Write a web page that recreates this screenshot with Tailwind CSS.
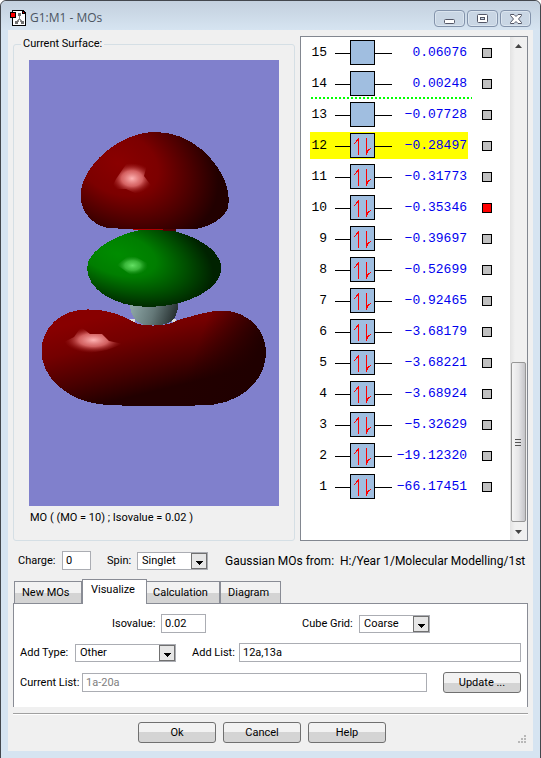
<!DOCTYPE html>
<html lang="en">
<head>
  <meta charset="UTF-8" />
  <meta name="viewport" content="width=device-width, initial-scale=1.0"/>
  <title>G1:M1 - MOs</title>
  <script src="https://cdn.jsdelivr.net/npm/@tailwindcss/browser@4"></script>
</head>
<body class="bg-white font-['Roboto',sans-serif] text-[11px] leading-4 text-black">

  <div class="min-h-screen flex flex-col rounded-t-md border border-[#43474d] bg-[#d6e4f1] px-[7px] pb-[7px]">

    <!-- title bar -->
    <header class="-mx-[7px] px-[7px] h-[29px] shrink-0 flex items-center rounded-t-md bg-gradient-to-b from-[#c3d0de] to-[#d6e4f1]">
      <svg class="w-4 h-[18px] ml-0.5 mt-1.5" viewBox="0 0 16 18" shape-rendering="crispEdges">
        <path d="M2.500 .5h10l3 3v12h-13z" fill="#fff" stroke="#000"/>
        <path d="M12 0h1l3 3v2h-1v-1h-3z" fill="#000"/>
        <path d="M13 2h1v1h-1z" fill="#f00"/>
        <path d="M9.500 6v4M9.500 9l-3 4M9.500 9l3 4" stroke="#888" stroke-width="1.500" fill="none"/>
        <path d="M8 3h3v3h-3zM5 11h3v3h-3zM11 11h3v3h-3z" fill="#707070"/>
        <rect x=".5" y="2.500" width="5" height="5" fill="#f00" stroke="#000"/>
      </svg>
      <h1 class="flex-1 ml-1 mt-1 font-['Open_Sans',sans-serif] text-[12px] text-[#4c5562]">G1:M1 - MOs</h1>
      <div class="flex gap-0.5 mt-1.5 mr-0.5">
        <button aria-label="Minimize" class="w-[31px] h-[17px] grid place-items-center rounded-sm border border-[#8393ab] bg-[#c9d6e4] shadow-[inset_0_0_0_1px_#dbe5ef]">
          <svg class="w-3 h-3" viewBox="0 0 12 12"><rect x=".5" y="6.500" width="10" height="4" rx="1" fill="#fff" stroke="#535666"/></svg>
        </button>
        <button aria-label="Maximize" class="w-[31px] h-[17px] grid place-items-center rounded-sm border border-[#8393ab] bg-[#c9d6e4] shadow-[inset_0_0_0_1px_#dbe5ef]">
          <svg class="w-3 h-3" viewBox="0 0 12 12"><rect x=".5" y="1.500" width="10" height="8" rx="1" fill="#fff" stroke="#535666"/><rect x="3.500" y="4.500" width="4" height="2" fill="#c9d6e4" stroke="#535666"/></svg>
        </button>
        <button aria-label="Close" class="w-[31px] h-[17px] grid place-items-center rounded-sm border border-[#8393ab] bg-[#c9d6e4] shadow-[inset_0_0_0_1px_#dbe5ef]">
          <svg class="w-3 h-3" viewBox="0 0 12 12"><path d="M.5 1.500h3.500l2 2 2-2h3.500v1l-3 3.500 3 3.500v1h-3.500l-2-2-2 2h-3.500v-1l3-3.500-3-3.500z" fill="#fff" stroke="#535666"/></svg>
        </button>
      </div>
    </header>

    <main class="flex-1 flex flex-col bg-[#f0f0f0] px-[5px] pt-1.5 pb-2">

      <div class="flex gap-[5px]">
        <!-- surface view -->
        <fieldset class="flex-1 min-w-0 h-[505px] rounded-[3px] border border-[#d5dfe5] px-[15px]">
          <legend class="-ml-2 px-0.5">Current Surface:</legend>
          <svg class="mt-2 w-full h-[446px] bg-[#8080cc]" viewBox="29 60 250 446" preserveAspectRatio="xMidYMid slice" role="img" aria-label="Molecular orbital 10">
            <defs>
              <radialGradient id="red1" gradientUnits="userSpaceOnUse" cx="118" cy="163" r="105" gradientTransform="translate(118 163) rotate(25) scale(1 .72) translate(-118 -163)">
                <stop offset="0" stop-color="#8a0000"/><stop offset=".4" stop-color="#7c0000"/><stop offset=".72" stop-color="#4d0000"/><stop offset="1" stop-color="#220000"/>
              </radialGradient>
              <radialGradient id="green" gradientUnits="userSpaceOnUse" cx="118" cy="254" r="98" gradientTransform="translate(118 254) rotate(16) scale(1 .52) translate(-118 -254)">
                <stop offset="0" stop-color="#008c00"/><stop offset=".4" stop-color="#007e00"/><stop offset=".72" stop-color="#004e00"/><stop offset="1" stop-color="#002200"/>
              </radialGradient>
              <linearGradient id="red2" gradientUnits="userSpaceOnUse" x1="120" y1="312" x2="142" y2="402">
                <stop offset="0" stop-color="#880000"/><stop offset=".3" stop-color="#740000"/><stop offset=".65" stop-color="#480000"/><stop offset=".92" stop-color="#220000"/>
              </linearGradient>
              <linearGradient id="shade" gradientUnits="userSpaceOnUse" x1="200" y1="338" x2="256" y2="358">
                <stop offset="0" stop-color="#200000" stop-opacity="0"/><stop offset="1" stop-color="#200000"/>
              </linearGradient>
              <linearGradient id="grey" gradientUnits="userSpaceOnUse" x1="134" y1="304" x2="174" y2="318">
                <stop offset="0" stop-color="#8aa3a3"/><stop offset=".5" stop-color="#647878"/><stop offset="1" stop-color="#293333"/>
              </linearGradient>
              <radialGradient id="pink"><stop offset="0" stop-color="#ffb4b4"/><stop offset=".5" stop-color="#e87878" stop-opacity=".8"/><stop offset="1" stop-color="#a02020" stop-opacity="0"/></radialGradient>
              <radialGradient id="lime"><stop offset="0" stop-color="#64e064"/><stop offset=".5" stop-color="#48c448" stop-opacity=".8"/><stop offset="1" stop-color="#209020" stop-opacity="0"/></radialGradient>
            </defs>
            <g shape-rendering="crispEdges">
              <path d="M130 319h5v3h-5zM172 319h4v3h-4z" fill="#ddd"/>
              <path d="M87 309.500C108 309 124 316 134 322C140 327 170 327 178 320C190 317 208 310.500 222 310.500C248 311 266 330 266 352C266 378 246 400 212 405C198 406 118 406 106 405C66 402 41.500 376 41.500 352C41.500 326 62 309.500 87 309.500Z" fill="url(#red2)"/>
              <path d="M178 320C190 317 208 310.500 222 310.500C248 311 266 330 266 352C266 378 246 400 212 405L178 405.500Z" fill="url(#shade)"/>
              <path d="M130 300h48c1 8-1 15-5 20c-4 4-12 5.500-20 5.500c-7 0-12-1-16-4c-5-5-8-12-7-21.500z" fill="url(#grey)"/>
              <path d="M155 132C120 132 80.500 166 80.500 196C81 212 93 225 106 227.500C125 230 175 229.500 195 229C212 227 226 216 228.500 206C230.500 182 217 163 201 149C188 138 172 132 155 132Z" fill="url(#red1)"/>
              <path d="M140 230C112 236 87 252 87 268C87 288 112 307 150 307C190 306 221.500 288 221.500 268C221.500 252 200 237 170 230Z" fill="url(#green)"/>
              <path d="M133 229h30v1h-30z" fill="#b00000"/>
              <path d="M163 229h13v2h-13z" fill="#500000"/>
            </g>
            <path d="M111 189l5-10 11-16 20 2-3 11 9 12-16 6-11-5z" fill="url(#pink)"/>
            <path d="M117 265l11-9 8 1 11 6 1 10-17 2z" fill="url(#lime)"/>
            <path d="M64 342l10-5 7-10 9 7 12 0 7 7 14 3-16 6-17 3-18-1z" fill="url(#pink)"/>
          </svg>
          <p class="mt-1 ml-px">MO ( (MO = 10) ; Isovalue = 0.02 )</p>
        </fieldset>

        <!-- orbital energies -->
        <section class="w-[228px] h-[505px] flex border border-[#828790] bg-white">
          <div class="flex-1 pl-[9px]">
            <table class="border-separate border-spacing-0 font-['Liberation_Mono',monospace] text-[13px]">
              <tbody id="orbitals"></tbody>
            </table>
          </div>
          <div class="w-[17px] flex flex-col items-center bg-gradient-to-r from-[#e3e3e3] to-[#f0f0f0] to-30%">
            <svg class="w-[7px] h-1 mt-[7px]" viewBox="0 0 7 4"><path d="M3.500 0L7 4H0z" fill="#444"/></svg>
            <div class="mt-auto w-[15px] h-40 grid place-items-center rounded-xs border border-[#979797] bg-gradient-to-r from-[#f5f5f5] via-[#e6e6e8] to-[#c4c4c8]">
              <svg class="w-[7px] h-2" viewBox="0 0 7 8" shape-rendering="crispEdges"><path d="M0 1h6M0 4h6M0 7h6" stroke="#555"/></svg>
            </div>
            <svg class="w-[7px] h-1 mt-2 mb-1.5" viewBox="0 0 7 4"><path d="M0 0h7L3.500 4z" fill="#444"/></svg>
          </div>
        </section>
      </div>

      <!-- charge and spin -->
      <div class="flex items-center mt-[10px] pl-[5px] h-[19px] whitespace-nowrap">
        <label for="charge" class="w-11 shrink-0">Charge:</label>
        <input id="charge" value="0" class="w-[29px] h-[19px] px-[3px] border border-[#abadb3] bg-white">
        <label for="spin" class="w-[30px] shrink-0 ml-4">Spin:</label>
        <span class="relative w-[71px] h-[18px] shrink-0">
          <select id="spin" class="block w-full h-full appearance-none pl-1 border border-[#abadb3] bg-white"><option>Singlet</option><option>Triplet</option></select>
          <svg class="absolute right-px top-px w-4 h-4 pointer-events-none" viewBox="0 0 16 16" shape-rendering="crispEdges"><rect x=".5" y=".5" width="15" height="15" fill="#e6e6e6" stroke="#707070"/><path d="M4 8h8l-4 4z" fill="#000"/></svg>
        </span>
        <p class="ml-[17px] text-[12px] whitespace-pre">Gaussian MOs from:  H:/Year 1/Molecular Modelling/1st</p>
      </div>

      <!-- tabs -->
      <div role="tablist" class="flex items-end mt-[9px] pl-px h-6">
        <button role="tab" aria-selected="false" class="w-[68px] h-[22px] pl-[7px] text-left border border-b-0 border-[#898c95] bg-linear-to-b from-[#f2f2f2] from-50% to-[#d4d4d4] to-50%">New MOs</button>
        <button role="tab" aria-selected="true" class="relative z-10 w-[65px] h-[25px] -mb-px pl-2 pb-1 text-left border border-b-0 border-[#898c95] bg-white">Visualize</button>
        <button role="tab" aria-selected="false" class="w-[73px] h-[22px] pl-1.5 text-left border border-l-0 border-b-0 border-[#898c95] bg-linear-to-b from-[#f2f2f2] from-50% to-[#d4d4d4] to-50%">Calculation</button>
        <button role="tab" aria-selected="false" class="w-[61px] h-[22px] pl-[7px] text-left border border-b-0 border-[#898c95] bg-linear-to-b from-[#f2f2f2] from-50% to-[#d4d4d4] to-50%">Diagram</button>
      </div>
      <div role="tabpanel" class="flex flex-col gap-[10px] h-[104px] border border-b-0 border-[#898c95] bg-white pt-[10px] px-1.5">
        <div class="flex items-center h-[19px] pl-[92px]">
          <label for="isovalue" class="w-[49px]">Isovalue:</label>
          <input id="isovalue" value="0.02" class="w-[45px] h-[19px] px-[3px] border border-[#abadb3] bg-white">
          <label for="grid" class="ml-auto w-[57px] whitespace-nowrap">Cube Grid:</label>
          <span class="relative w-[71px] h-[18px] mr-[91px]">
            <select id="grid" class="block w-full h-full appearance-none pl-1 border border-[#abadb3] bg-white"><option>Coarse</option><option>Medium</option><option>Fine</option></select>
            <svg class="absolute right-px top-px w-4 h-4 pointer-events-none" viewBox="0 0 16 16" shape-rendering="crispEdges"><rect x=".5" y=".5" width="15" height="15" fill="#e6e6e6" stroke="#707070"/><path d="M4 8h8l-4 4z" fill="#000"/></svg>
          </span>
        </div>
        <div class="flex items-center h-[19px] whitespace-nowrap">
          <label for="type" class="w-[55px]">Add Type:</label>
          <span class="relative w-[101px] h-[18px]">
            <select id="type" class="block w-full h-full appearance-none pl-1 border border-[#abadb3] bg-white"><option>Other</option><option>All</option></select>
            <svg class="absolute right-px top-px w-4 h-4 pointer-events-none" viewBox="0 0 16 16" shape-rendering="crispEdges"><rect x=".5" y=".5" width="15" height="15" fill="#e6e6e6" stroke="#707070"/><path d="M4 8h8l-4 4z" fill="#000"/></svg>
          </span>
          <label for="list" class="w-[47px] ml-4">Add List:</label>
          <input id="list" value="12a,13a" class="flex-1 min-w-0 h-[19px] px-[3px] border border-[#abadb3] bg-white">
        </div>
        <div class="flex items-center h-[21px] whitespace-nowrap">
          <label for="current" class="w-[62px]">Current List:</label>
          <input id="current" value="1a-20a" disabled class="flex-1 min-w-0 h-[19px] px-[3px] border border-[#abadb3] bg-white text-[#808080]">
          <button class="w-[78px] h-[21px] ml-4 rounded-[3px] border border-[#707070] bg-linear-to-b from-[#f2f2f2] from-50% to-[#d4d4d4] to-50%">Update ...</button>
        </div>
      </div>

      <hr class="mt-1.5 h-0.5 border-t border-b border-t-[#a0a0a0] border-b-white">

      <footer class="relative flex justify-center gap-[7px] mt-[7px] pr-[17px]">
        <button class="w-[78px] h-[21px] rounded-[3px] border border-[#707070] bg-linear-to-b from-[#f2f2f2] from-50% to-[#d4d4d4] to-50%">Ok</button>
        <button class="w-[78px] h-[21px] rounded-[3px] border border-[#707070] bg-linear-to-b from-[#f2f2f2] from-50% to-[#d4d4d4] to-50%">Cancel</button>
        <button class="w-[78px] h-[21px] rounded-[3px] border border-[#707070] bg-linear-to-b from-[#f2f2f2] from-50% to-[#d4d4d4] to-50%">Help</button>
        <svg class="absolute right-0.5 bottom-0 w-2 h-2" viewBox="0 0 8 8" fill="#b8b8b8"><path d="M6 0h2v2h-2zM6 3h2v2h-2zM6 6h2v2h-2zM3 3h2v2h-2zM3 6h2v2h-2zM0 6h2v2h-2z"/></svg>
      </footer>
    </main>
  </div>

  <script>
    const orbitals = [
      [15, '0.06076'], [14, '0.00248'], [13, '−0.07728'], [12, '−0.28497'], [11, '−0.31773'],
      [10, '−0.35346'], [9, '−0.39697'], [8, '−0.52699'], [7, '−0.92465'], [6, '−3.68179'],
      [5, '−3.68221'], [4, '−3.68924'], [3, '−5.32629'], [2, '−19.12320'], [1, '−66.17451']
    ];
    const HOMO = 12;
    const arrows = '<path d="M23.500 4.500v17M31.500 4.500v17" stroke="#f00"/><path d="M24 4l-5 7 5-4zM31 22l5-7-5 3z" fill="#f00"/>';
    // energy cut-off line under level 14
    const gap = '<div class="absolute z-10 left-px bottom-0 w-[161px] h-0.5 bg-[repeating-linear-gradient(90deg,#00ff00_0_2px,transparent_2px_4px)]"></div>';

    document.getElementById('orbitals').innerHTML = orbitals.map(([n, energy]) => {
      const cell = n === HOMO ? 'border-y-2 border-white bg-[#ffff00] p-0' : 'border-y-2 border-white p-0';
      return `<tr class="relative h-[31px]">
        <td class="${cell}"><div class="w-[17px] text-right">${n}</div>${n === 14 ? gap : ''}</td>
        <td class="${cell}"><svg class="block ml-2 w-[57px] h-[25px]" viewBox="0 0 57 25" shape-rendering="crispEdges">
          <path d="M0 13.500h57" stroke="#000"/><rect x="15.500" y=".5" width="24" height="24" fill="#a0bee0" stroke="#000"/>${n <= HOMO ? arrows : ''}</svg></td>
        <td class="${cell}"><div class="w-[76px] pr-px text-right text-[#0000ee]">${energy}</div></td>
        <td class="p-0 pl-3.5"><input type="checkbox" aria-label="Orbital ${n}" ${n === 10 ? 'checked' : ''} class="block appearance-none w-2.5 h-2.5 border border-black bg-[#c0c0c0] checked:bg-[#ff0000]"></td>
      </tr>`;
    }).join('');
  </script>
</body>
</html>
